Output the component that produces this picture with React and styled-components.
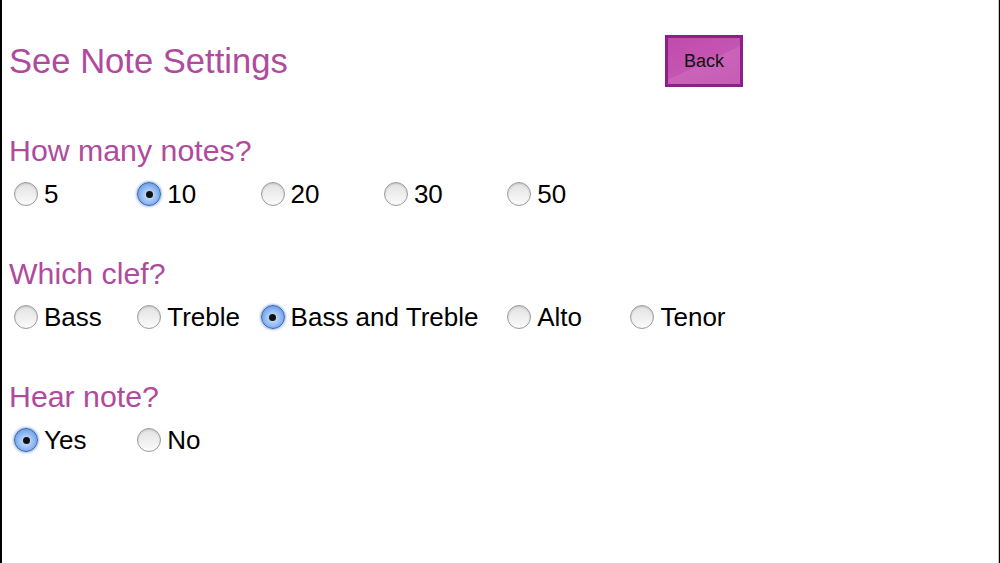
import { useState } from "react"
import styled, { createGlobalStyle } from "styled-components"

const GlobalStyle = createGlobalStyle`
    html, body {
        margin: 0;
        padding: 0;
        background: #fff;
        font-family: "Liberation Sans", Arial, Helvetica, sans-serif;
    }
`
const Frame = styled.div`
    box-sizing: border-box;
    height: 100vh;
    border-left: 2px solid #000;
    border-right: 1px solid #000;
    box-shadow: inset -1px 0 0 #c4c4c4;
    padding: 35px 0 0 7px;
`
const Header = styled.div`
    display: grid;
    grid-template-columns: 656px 78px;
    align-items: center;
    height: 52px;
`
const Title = styled.h1`
    margin: 0;
    font-size: 34.6px;
    line-height: 40px;
    font-weight: normal;
    color: #b04a9d;
`
const Button = styled.button`
    box-sizing: border-box;
    width: 78px;
    height: 52px;
    border: 3px solid #8c1f8b;
    background: linear-gradient(155deg, #c04cac 0%, #c455b2 52%, #ca63b9 53%, #c55db4 100%);
    font-family: "Liberation Sans", Arial, sans-serif;
    font-size: 18px;
    color: #111;
    padding: 0;
    cursor: pointer;
`
const Section = styled.section`
    margin-top: ${p => p.$first ? "46px" : "47px"};
`
const Heading = styled.h2`
    margin: 0;
    font-size: 30.3px;
    line-height: 36px;
    font-weight: normal;
    color: #b04a9d;
`
const Options = styled.div`
    display: grid;
    grid-template-columns: repeat(6, 123.3px);
    margin: 10px 0 0 5px;
    height: 30px;
`
const Option = styled.label`
    grid-column: span ${p => p.$span || 1};
    display: flex;
    align-items: center;
    gap: 6px;
    font-size: 26px;
    line-height: 30px;
    color: #000;
    white-space: nowrap;
    cursor: pointer;
`
const Radio = styled.input`
    appearance: none;
    box-sizing: border-box;
    margin: 0;
    width: 24px;
    height: 24px;
    border-radius: 50%;
    border: 1px solid #9b9b9b;
    background: linear-gradient(#e2e2e2, #fbfbfb);
    box-shadow: inset 0 1px 2px rgba(0, 0, 0, 0.15);
    display: grid;
    place-items: center;
    flex-shrink: 0;

    &:checked {
        border-color: #3a64a8;
        background: radial-gradient(circle at 50% 55%, #d8e8fc 0%, #9fc3f4 40%, #4584de 100%);
        box-shadow: 0 0 2px 1px rgba(70, 130, 225, 0.5);
    }
    &:checked::after {
        content: "";
        width: 7px;
        height: 7px;
        border-radius: 50%;
        background: #111;
    }
`

const groups = [
    { name: "notes", title: "How many notes?", options: ["5", "10", "20", "30", "50"], initial: "10" },
    { name: "clef", title: "Which clef?", options: ["Bass", "Treble", "Bass and Treble", "Alto", "Tenor"], initial: "Bass and Treble" },
    { name: "hear", title: "Hear note?", options: ["Yes", "No"], initial: "Yes" },
]

const App = () => {
    const [values, setValues] = useState(
        Object.fromEntries(groups.map(g => [g.name, g.initial]))
    )

    return (
        <Frame>
            <GlobalStyle />
            <Header>
                <Title>See Note Settings</Title>
                <Button>Back</Button>
            </Header>
            {groups.map((g, i) => (
                <Section key={g.name} $first={i === 0}>
                    <Heading>{g.title}</Heading>
                    <Options>
                        {g.options.map(opt => (
                            <Option key={opt} $span={opt.length > 8 ? 2 : 1}>
                                <Radio
                                    type="radio"
                                    name={g.name}
                                    checked={values[g.name] === opt}
                                    onChange={() => setValues({ ...values, [g.name]: opt })}
                                />
                                {opt}
                            </Option>
                        ))}
                    </Options>
                </Section>
            ))}
        </Frame>
    )
}

export default App
